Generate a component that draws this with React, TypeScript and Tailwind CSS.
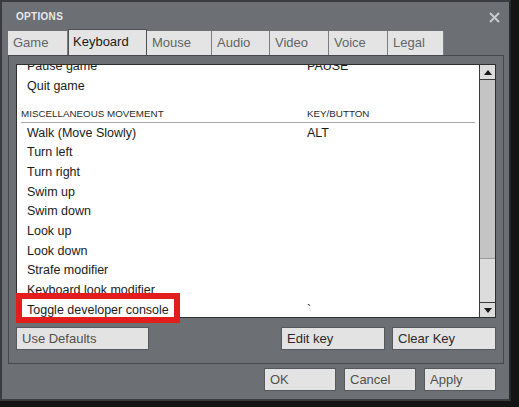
import React from 'react';

const tabs = [
  { name: 'Game', w: 'w-[60px]' },
  { name: 'Keyboard', w: 'w-[79px]', active: true },
  { name: 'Mouse', w: 'w-[65px]' },
  { name: 'Audio', w: 'w-[58px]' },
  { name: 'Video', w: 'w-[59px]' },
  { name: 'Voice', w: 'w-[59px]' },
  { name: 'Legal', w: 'w-[56px]' },
];

const rows: [string, string][] = [
  ['Walk (Move Slowly)', 'ALT'],
  ['Turn left', ''],
  ['Turn right', ''],
  ['Swim up', ''],
  ['Swim down', ''],
  ['Look up', ''],
  ['Look down', ''],
  ['Strafe modifier', ''],
  ['Keyboard look modifier', ''],
  ['Toggle developer console', '`'],
];

function Row({ label, value }: { label: string; value: string }) {
  return (
    <div className="flex h-[19.7px] items-center pl-[10px] text-[12.5px] text-[#1a1a1a]">
      <div className="w-[280px] shrink-0 whitespace-nowrap">{label}</div>
      <div className="whitespace-nowrap">{value}</div>
    </div>
  );
}

function Button({ label, className }: { label: string; className: string }) {
  return (
    <div
      className={`h-[23px] border border-[#55585c] bg-[#e3e3e3] pl-[5px] text-[13px] leading-[21px] text-[#505050] ${className}`}
    >
      {label}
    </div>
  );
}

function Scrollbar() {
  return (
    <div className="flex w-[16px] shrink-0 flex-col border-l border-[#3a3a3a] bg-[#c4c4c4]">
      <div className="flex h-[15px] items-center justify-center border-b border-[#3a3a3a] bg-[#dcdcdc]">
        <svg width="8" height="5" viewBox="0 0 8 5">
          <path d="M0 5 L4 0 L8 5 Z" fill="#1a1a1a" />
        </svg>
      </div>
      <div className="flex-1" />
      <div className="h-[44px] border-t border-[#9a9a9a] bg-[#dcdcdc]" />
      <div className="flex h-[15px] items-center justify-center border-t border-[#3a3a3a] bg-[#dcdcdc]">
        <svg width="8" height="5" viewBox="0 0 8 5">
          <path d="M0 0 L8 0 L4 5 Z" fill="#1a1a1a" />
        </svg>
      </div>
    </div>
  );
}

export default function App() {
  return (
    <div className="relative h-[407px] w-[519px] overflow-hidden bg-[#141414] font-['Liberation_Sans',Arial,sans-serif]">
      <div className="flex h-[401px] w-[511px] flex-col border-2 border-[#3a3c3f] border-r-[#26282a] bg-[#6c6f73]">
        {/* Title bar */}
        <div className="flex h-[27px] shrink-0 items-center justify-between pl-[14px] pr-[9px] pt-[1px]">
          <span className="text-[10px] font-bold tracking-[0.3px] text-[#e8e8e8]">OPTIONS</span>
          <svg width="11" height="11" viewBox="0 0 11 11" className="mt-[3px]">
            <path d="M1 1 L10 10 M10 1 L1 10" stroke="#c9cbcd" strokeWidth="2" />
          </svg>
        </div>

        {/* Tabs */}
        <div className="flex h-[26px] shrink-0 items-end pl-[6px]">
          {tabs.map((t) =>
            t.active ? (
              <div
                key={t.name}
                className={`${t.w} h-[26px] border border-b-0 border-[#4c4f53] bg-[#e4e4e4] pl-[4px] text-[13px] leading-[23px] text-[#1a1a1a]`}
              >
                {t.name}
              </div>
            ) : (
              <div
                key={t.name}
                className={`${t.w} h-[24px] border-r border-[#7a7d81] bg-[#e4e4e4] pl-[5px] text-[13px] leading-[24px] text-[#606468]`}
              >
                {t.name}
              </div>
            )
          )}
        </div>

        {/* Panel */}
        <div className="ml-[6px] flex h-[309px] w-[496px] shrink-0 flex-col border border-[#45484c] px-[7px] pt-[8px]">
          <div className="flex h-[254px] w-[480px] border border-[#2e2e2e] bg-white">
            <div className="flex-1 overflow-hidden">
              <div className="-mt-[8px]">
                <Row label="Pause game" value="PAUSE" />
                <Row label="Quit game" value="" />
                <div className="mx-[4px] flex h-[26.8px] items-end border-b border-[#a8a8a8] pb-[3px] text-[9.8px] leading-[11px] text-[#2a2a2a]">
                  <div className="w-[286px] shrink-0">MISCELLANEOUS MOVEMENT</div>
                  <div>KEY/BUTTON</div>
                </div>
                {rows.map(([l, v]) => (
                  <Row key={l} label={l} value={v} />
                ))}
              </div>
            </div>
            <Scrollbar />
          </div>

          <div className="mt-[9px] flex gap-[7px]">
            <Button label="Use Defaults" className="w-[133px] text-[#5a5d60]" />
            <div className="flex-1" />
            <Button label="Edit key" className="w-[104px] !text-[#2a2a2a]" />
            <Button label="Clear Key" className="w-[104px] !text-[#2a2a2a]" />
          </div>
        </div>

        {/* Bottom buttons */}
        <div className="mt-[4px] flex justify-end gap-[8px] pr-[13px]">
          <Button label="OK" className="w-[72px]" />
          <Button label="Cancel" className="w-[72px]" />
          <Button label="Apply" className="w-[72px]" />
        </div>
      </div>

      {/* Annotation highlight */}
      <div className="absolute left-[16px] top-[293px] h-[30px] w-[164px] border-[6px] border-[#e31c1c]" />
    </div>
  );
}
